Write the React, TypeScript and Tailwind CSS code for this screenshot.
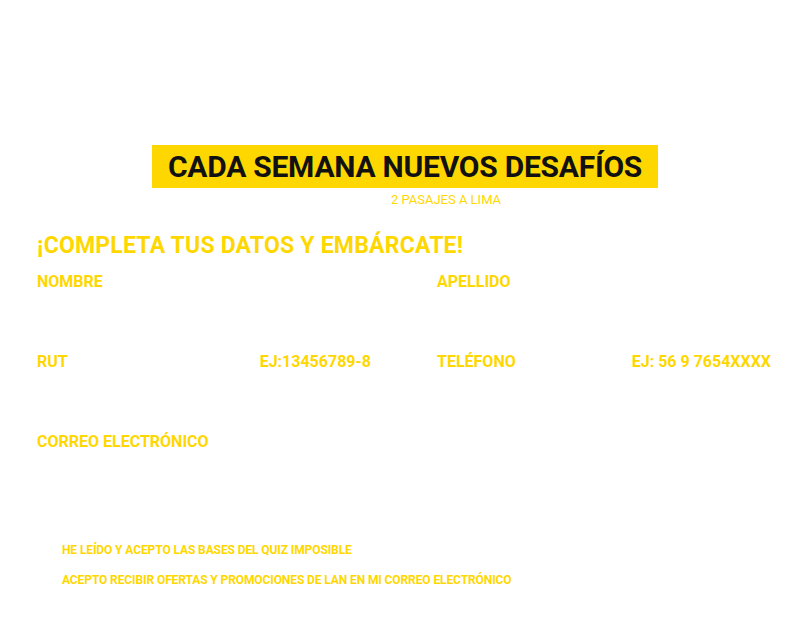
const fields = [
  [
    { label: 'NOMBRE', hint: '' },
    { label: 'APELLIDO', hint: '' },
  ],
  [
    { label: 'RUT', hint: 'EJ:13456789-8' },
    { label: 'TELÉFONO', hint: 'EJ: 56 9 7654XXXX' },
  ],
  [{ label: 'CORREO ELECTRÓNICO', hint: '' }],
];

const checks = [
  'HE LEÍDO Y ACEPTO LAS BASES DEL QUIZ IMPOSIBLE',
  'ACEPTO RECIBIR OFERTAS Y PROMOCIONES DE LAN EN MI CORREO ELECTRÓNICO',
];

const App = () => {
  return (
    <div className="min-h-[617px] w-[810px] overflow-hidden bg-white font-['Roboto',sans-serif] text-[#ffd700]">
      <div className="flex flex-col items-center pt-[145px]">
        <h1 className="bg-[#ffd700] px-[16px] text-[30px] leading-[43px] font-bold tracking-[-0.25px] text-[#111]">
          CADA SEMANA NUEVOS DESAFÍOS
        </h1>
        <p className="mt-[4px] ml-[82px] text-[13px] leading-[16px]">2 PASAJES A LIMA</p>
      </div>

      <form className="mt-[23px] pl-[37px]">
        <h2 className="text-[23px] leading-[30px] font-bold tracking-[0.2px]">¡COMPLETA TUS DATOS Y EMBÁRCATE!</h2>
        <div className="mt-[11px] flex flex-col gap-[60px]">
          {fields.map((row, i) => (
            <div key={i} className="grid grid-cols-[400px_400px]">
              {row.map((f) => (
                <label key={f.label} className="flex w-[334px] justify-between text-[16px] leading-[20px] font-bold">
                  <span>{f.label}</span>
                  <span>{f.hint}</span>
                </label>
              ))}
            </div>
          ))}
        </div>
        <div className="mt-[90px] flex flex-col gap-[14px] pl-[25px]">
          {checks.map((c) => (
            <label key={c} className="text-[12px] leading-[16px] font-bold tracking-[-0.1px]">
              {c}
            </label>
          ))}
        </div>
      </form>
    </div>
  );
};

export default App;
